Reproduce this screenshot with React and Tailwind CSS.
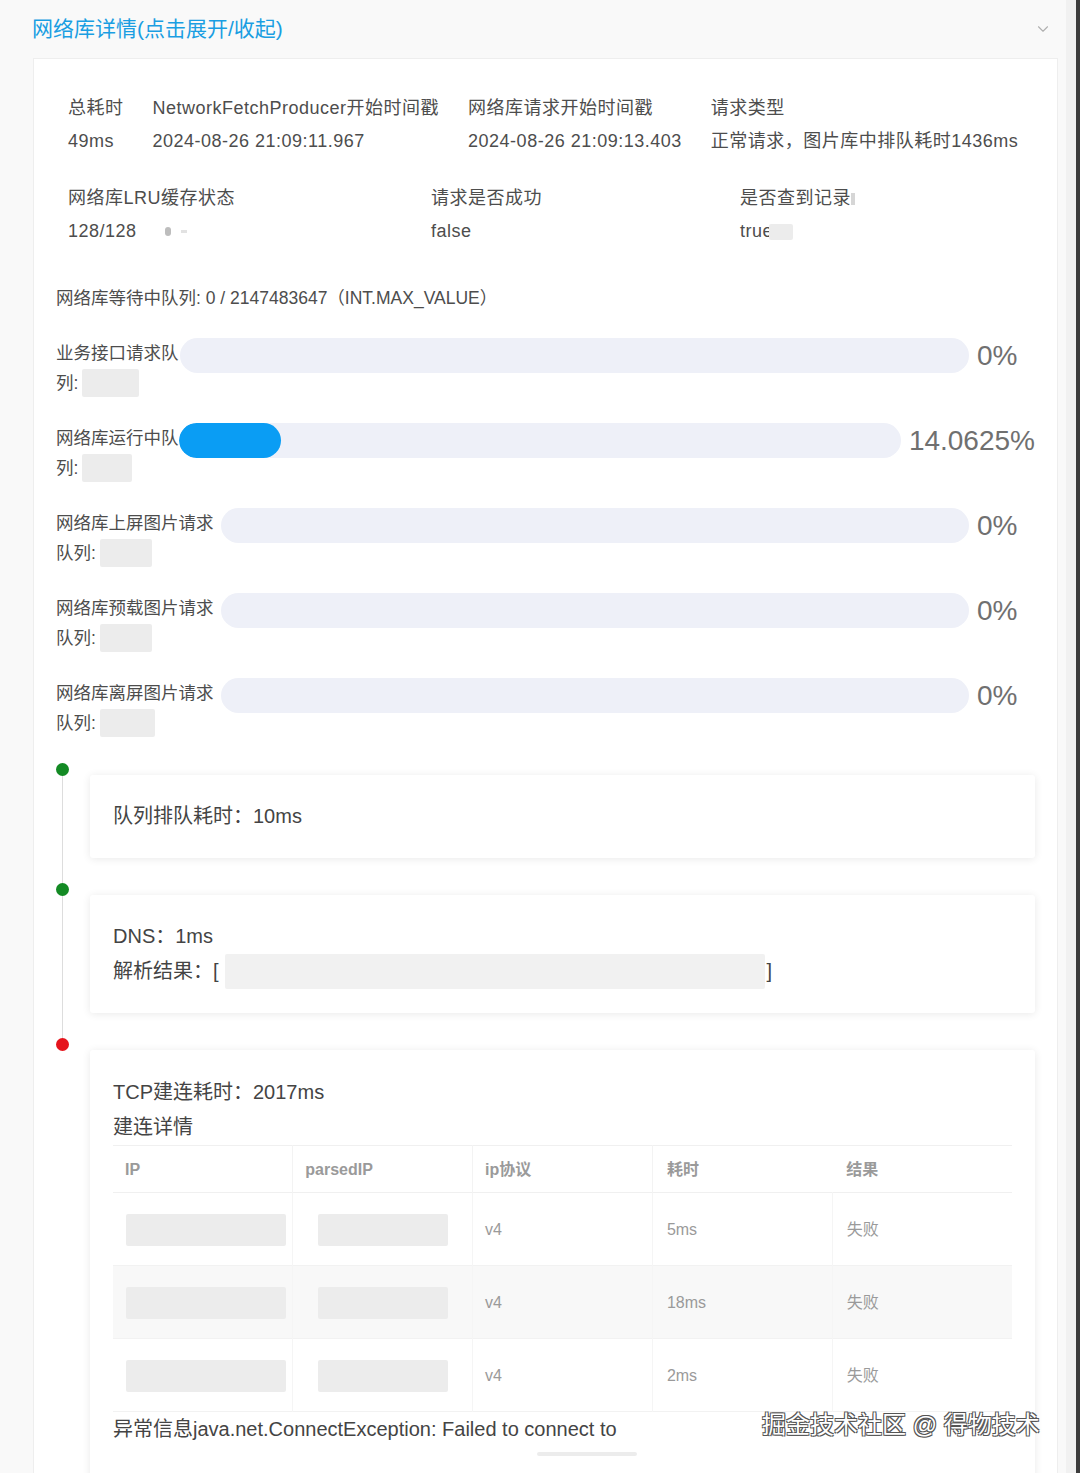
import { ChevronDown } from 'lucide-react';

const font = "font-['Liberation_Sans','Noto_Sans_CJK_SC',sans-serif]";

const queues = [
  { label: '业务接口请求队', tail: '列:', labelW: 'w-[124px]', boxW: 'w-[57px]', pct: 0 },
  { label: '网络库运行中队', tail: '列:', labelW: 'w-[123px]', boxW: 'w-[50px]', pct: 14.0625 },
  { label: '网络库上屏图片请求', tail: '队列:', labelW: 'w-[165px]', boxW: 'w-[52px]', pct: 0 },
  { label: '网络库预载图片请求', tail: '队列:', labelW: 'w-[165px]', boxW: 'w-[52px]', pct: 0 },
  { label: '网络库离屏图片请求', tail: '队列:', labelW: 'w-[165px]', boxW: 'w-[55px]', pct: 0 },
];

const tcpRows = [
  { proto: 'v4', cost: '5ms', result: '失败' },
  { proto: 'v4', cost: '18ms', result: '失败', shaded: true },
  { proto: 'v4', cost: '2ms', result: '失败' },
];

function Redact({ className = '' }) {
  return <span className={`inline-block bg-[#ececec] rounded-[2px] align-middle ${className}`}></span>;
}

function QueueRow({ q }) {
  return (
    <div className="flex items-start">
      <div className={`${q.labelW} shrink-0 text-[17.5px] leading-[30px] text-[#4d4d4d]`}>
        <div className="whitespace-nowrap">{q.label}</div>
        <div className="flex items-center">
          {q.tail}
          <Redact className={`${q.boxW} h-[28px] ml-[4px]`} />
        </div>
      </div>
      <div className="flex-1 flex items-center h-[35px]">
        <div className="flex-1 h-[35px] rounded-full bg-[#eef0f8] overflow-hidden">
          {q.pct > 0 && (
            <div className="h-full rounded-full bg-[#0a9df4]" style={{ width: `${q.pct}%` }}></div>
          )}
        </div>
        <div className="min-w-[58px] ml-[8px] text-[28px] leading-[35px] text-[#707070]">{q.pct}%</div>
      </div>
    </div>
  );
}

function TimelineItem({ color, last, children }) {
  return (
    <div className={`flex ${last ? '' : 'pb-[25px]'}`}>
      <div className="w-[13px] shrink-0 flex flex-col items-center">
        <div className={`w-[13px] h-[13px] rounded-full ${color}`}></div>
        {!last && <div className="w-px flex-1 bg-[#dddddd] -mb-[25px]"></div>}
      </div>
      <div className={`flex-1 ml-[21px] mt-[12px] bg-white rounded-[3px] shadow-[0_1px_8px_rgba(0,0,0,0.09)] px-[23px] ${last ? 'pt-[25px] pb-[80px]' : 'py-[24px]'} text-[20px] leading-[35px] text-[#444]`}>
        {children}
      </div>
    </div>
  );
}

export default function App() {
  return (
    <div className={`${font} w-[1080px] h-[1473px] overflow-hidden bg-[#f9f9f9] flex relative`}>
      <div className="w-[1066px] shrink-0 flex flex-col">
        <div className="h-[58px] shrink-0 flex items-center justify-between pl-[32px] pr-[14px]">
          <span className="text-[21px] text-[#1a9ee2]">网络库详情(点击展开/收起)</span>
          <ChevronDown size={18} strokeWidth={1.5} className="text-[#b0b0b0]" />
        </div>

        <div className="flex-1 ml-[33px] mr-[8px] bg-white border border-b-0 border-[#eeeeee] px-[22px] pt-[33px]">
          <div className="pl-[12px] text-[18px] tracking-[0.5px] leading-[33px] text-[#4d4d4d]">
            <div className="flex gap-[29px]">
              <div>
                <div>总耗时</div>
                <div>49ms</div>
              </div>
              <div>
                <div>NetworkFetchProducer开始时间戳</div>
                <div>2024-08-26 21:09:11.967</div>
              </div>
              <div>
                <div>网络库请求开始时间戳</div>
                <div>2024-08-26 21:09:13.403</div>
              </div>
              <div>
                <div>请求类型</div>
                <div>正常请求，图片库中排队耗时1436ms</div>
              </div>
            </div>
            <div className="flex mt-[24px]">
              <div className="w-[363px]">
                <div>网络库LRU缓存状态</div>
                <div className="flex items-center">
                  128/128
                  <span className="ml-[28px] w-[6px] h-[9px] rounded-full bg-[#bdbdbd]"></span>
                  <span className="ml-[10px] w-[6px] h-[3px] bg-[#e2e2e2]"></span>
                </div>
              </div>
              <div className="w-[309px]">
                <div>请求是否成功</div>
                <div>false</div>
              </div>
              <div>
                <div className="flex items-center">
                  是否查到记录
                  <span className="w-[4px] h-[12px] bg-[#d6d6d6]"></span>
                </div>
                <div className="flex items-center">
                  true
                  <Redact className="w-[24px] h-[16px] -ml-[4px] bg-[#e3e3e3]" />
                </div>
              </div>
            </div>
          </div>

          <div className="mt-[35px] text-[17.5px] leading-[30px] text-[#4d4d4d]">
            网络库等待中队列: 0 / 2147483647（INT.MAX_VALUE）
          </div>

          <div className="mt-[25px] flex flex-col gap-[25px]">
            {queues.map((q) => (
              <QueueRow key={q.label} q={q} />
            ))}
          </div>

          <div className="mt-[25px]">
            <TimelineItem color="bg-[#138a24]">
              <div>队列排队耗时：10ms</div>
            </TimelineItem>
            <TimelineItem color="bg-[#138a24]">
              <div>DNS：1ms</div>
              <div className="flex items-center">
                解析结果：[
                <Redact className="w-[540px] h-[35px] ml-[6px] bg-[#f1f1f1]" />
                <span className="ml-[2px]">]</span>
              </div>
            </TimelineItem>
            <TimelineItem color="bg-[#e5141c]" last>
              <div>TCP建连耗时：2017ms</div>
              <div>建连详情</div>
              <table className="w-full table-fixed border-collapse text-[16px] text-[#9a9a9a]">
                <thead>
                  <tr className="h-[47px] border-t border-b border-[#f0f0f0]">
                    <th className="text-left font-semibold pl-[12px] border-r border-[#f3f3f3]">IP</th>
                    <th className="text-left font-semibold pl-[12px] border-r border-[#f3f3f3]">parsedIP</th>
                    <th className="text-left font-semibold pl-[12px] border-r border-[#f3f3f3]">ip协议</th>
                    <th className="text-left font-semibold pl-[14px]">耗时</th>
                    <th className="text-left font-semibold pl-[14px]">结果</th>
                  </tr>
                </thead>
                <tbody>
                  {tcpRows.map((r, i) => (
                    <tr key={i} className={`h-[73px] border-b border-[#f2f2f2] ${r.shaded ? 'bg-[#f8f8f8]' : ''}`}>
                      <td className="pl-[13px] border-r border-[#f5f5f5]">
                        <Redact className="w-[160px] h-[32px]" />
                      </td>
                      <td className="pl-[25px] border-r border-[#f5f5f5]">
                        <Redact className="w-[130px] h-[32px]" />
                      </td>
                      <td className="pl-[12px] border-r border-[#f5f5f5]">{r.proto}</td>
                      <td className="pl-[14px] border-r border-[#f5f5f5]">{r.cost}</td>
                      <td className="pl-[14px]">{r.result}</td>
                    </tr>
                  ))}
                </tbody>
              </table>
              <div className="flex items-start">
                异常信息java.net.ConnectException: Failed to connect to
                <Redact className="w-[100px] h-[4px] -ml-[80px] mt-[40px] bg-[#e2e2e2]" />
              </div>
            </TimelineItem>
          </div>
        </div>
      </div>
      <div className="w-[10px] shrink-0 bg-[#f1f1f1]"></div>
      <div className="w-[4px] shrink-0 bg-[#3c3c3c]"></div>

      <div className="absolute left-[762px] top-[1408px] text-[24px] leading-[34px] text-white [text-shadow:-1px_-1px_0_#555,1px_-1px_0_#555,-1px_1px_0_#555,1px_1px_0_#555]">
        掘金技术社区 @ 得物技术
      </div>
    </div>
  );
}
